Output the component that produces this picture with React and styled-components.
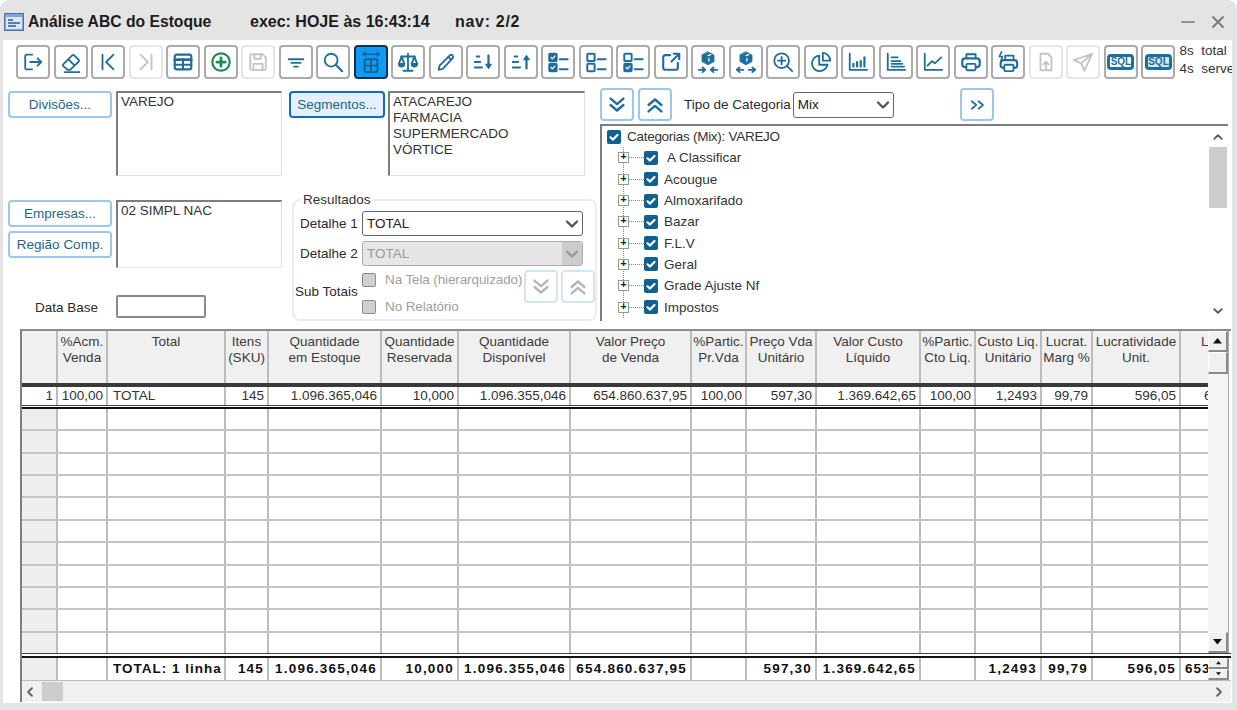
import React from 'react';
import styled, { createGlobalStyle } from 'styled-components';

const Global = createGlobalStyle`
  html, body { margin: 0; padding: 0; background: #fff; }
  * { box-sizing: border-box; }
  body { font-family: "Liberation Sans", Arial, sans-serif; font-size: 13.5px; color: #2b2b2b; }
`;

const BLUE = '#1f6d9f';
const COLS = '36px 50px 118px 43px 113px 77px 112px 121px 55px 70px 104px 55px 66px 51px 88px 27px';

const Window = styled.div`
  width: 1237px;
  height: 710px;
  background: #e4e4e4;
  border-radius: 9px 9px 0 0;
  display: flex;
  flex-direction: column;
  overflow: hidden;
`;
const TitleBar = styled.div`
  height: 40px;
  flex-shrink: 0;
  display: flex;
  align-items: center;
  padding: 3px 0 0 4px;
  color: #1c1c1c;
`;
const Title = styled.span`
  font-weight: 700;
  font-size: 15.7px;
  margin-left: 4px;
  width: 222px;
`;
const TitleInfo = styled.span`
  font-weight: 700;
  font-size: 16px;
  width: ${p => p.$w}px;
  letter-spacing: ${p => p.$spread ?? 0}px;
`;
const WinControls = styled.div`
  margin-left: auto;
  display: flex;
  gap: 16px;
  padding-right: 12px;
  color: #777;
`;
const Body = styled.div`
  flex: 1;
  margin: 0 5px 7px 3px;
  background: #fff;
  display: flex;
  flex-direction: column;
  overflow: hidden;
`;
const Toolbar = styled.div`
  height: 45px;
  flex-shrink: 0;
  display: flex;
  gap: 3.53px;
  padding: 5px 0 0 13px;
`;
const ToolButton = styled.div`
  width: 34px;
  height: 34px;
  flex-shrink: 0;
  display: flex;
  align-items: center;
  justify-content: center;
  border-radius: 4px;
  border: 2px solid ${p => (p.$active ? '#10324f' : p.$off ? '#e6e6e6' : '#ababab')};
  background: ${p => (p.$active ? '#0d9bf6' : '#fff')};
  color: ${p => (p.$active ? '#17608f' : p.$off ? '#c4c4c4' : p.$green ? '#1d8a57' : BLUE)};
`;
const SqlTag = styled.span`
  width: 27px;
  height: 16px;
  border: 3px solid ${BLUE};
  border-radius: 4px;
  background: ${p => (p.$light ? '#d5e6f1' : '#fff')};
  color: ${BLUE};
  font: 700 10px/10px "Liberation Sans", sans-serif;
  text-align: center;
`;
const Stats = styled.div`
  flex-shrink: 0;
  margin: -3px 0 0 0.5px;
  font-size: 13.5px;
  line-height: 18px;
  white-space: pre;
  color: #333;
`;

const Form = styled.div`
  height: 244px;
  flex-shrink: 0;
  display: flex;
  padding-left: 5px;
`;
const ColLeft = styled.div`
  width: 274px;
  padding-top: 6px;
`;
const ColMiddle = styled.div`
  width: 308px;
  margin-left: 7px;
  padding-top: 6px;
`;
const ColRight = styled.div`
  width: 628px;
  margin-left: 3px;
  padding-top: 3px;
`;
const Row = styled.div`
  display: flex;
  gap: ${p => p.$gap ?? 4}px;
  margin-top: ${p => p.$top ?? 0}px;
  align-items: ${p => p.$align ?? 'flex-start'};
`;
const Stack = styled.div`
  display: flex;
  flex-direction: column;
  gap: 4px;
`;
const PickButton = styled.div`
  width: ${p => p.$w}px;
  height: 27px;
  display: flex;
  align-items: center;
  justify-content: center;
  border-radius: 4px;
  font-size: 13.5px;
  color: #1d6688;
  border: 2px solid ${p => (p.$focus ? '#0f6cc4' : '#9cc6ee')};
  background: ${p => (p.$focus ? '#e4f0fb' : '#fff')};
`;
const ListBox = styled.div`
  width: ${p => p.$w}px;
  height: ${p => p.$h}px;
  padding: 1px 3px;
  line-height: 16px;
  border-style: solid;
  border-width: 2px 1px 1px 2px;
  border-color: #7d7d7d #e2e2e2 #e2e2e2 #7d7d7d;
  white-space: pre-line;
  color: #333;
`;
const DataLabel = styled.span`
  width: 108px;
  padding-left: 27px;
  margin-top: 2px;
`;
const DateInput = styled.div`
  width: 90px;
  height: 23px;
  border: 2px solid #8a8a8a;
  border-radius: 2px;
`;
const Group = styled.fieldset`
  width: 305px;
  height: 128px;
  margin: 17px 0 0 3px;
  padding: 0 0 0 1px;
  border: 2px solid #ececec;
  border-radius: 8px;
  min-inline-size: 0;
`;
const GroupTitle = styled.legend`
  padding: 0 2px;
  margin-left: 6px;
  line-height: 14px;
  color: #333;
`;
const FieldLabel = styled.span`
  width: 67px;
  padding-left: 5px;
  line-height: 25px;
`;
const SelectBox = styled.div`
  width: ${p => p.$w}px;
  height: ${p => p.$h ?? 25}px;
  display: flex;
  align-items: center;
  justify-content: space-between;
  padding-left: 4px;
  border-radius: 3px;
  border: 1.5px solid ${p => (p.$off ? '#adadad' : '#666')};
  background: ${p => (p.$off ? '#e6e6e6' : '#fff')};
  color: ${p => (p.$off ? '#999' : '#222')};
`;
const SelectArrow = styled.span`
  width: 20px;
  height: 100%;
  display: flex;
  align-items: center;
  justify-content: center;
  background: ${p => (p.$off ? '#cdcdcd' : 'transparent')};
  color: ${p => (p.$off ? '#999' : '#555')};
`;
const SubLabel = styled.span`
  width: 68px;
  margin-top: 18px;
`;
const CheckLine = styled.div`
  display: flex;
  align-items: center;
  gap: 9px;
  height: 27px;
  width: 162px;
  white-space: nowrap;
  letter-spacing: -0.12px;
  color: #a0a0a0;
`;
const GrayCheck = styled.span`
  width: 14px;
  height: 14px;
  flex-shrink: 0;
  border: 1.5px solid #8c8c8c;
  border-radius: 2px;
  background: #cfcfcf;
`;
const ChevronButton = styled.div`
  width: 34px;
  height: ${p => p.$h ?? 33}px;
  margin-top: ${p => p.$top ?? 0}px;
  display: flex;
  align-items: center;
  justify-content: center;
  border-radius: 4px;
  border: 2px solid ${p => (p.$off ? '#d4e4f5' : '#9cc6ee')};
  color: ${p => (p.$off ? '#b5b5b5' : BLUE)};
  background: #fff;
`;
const CategoryLabel = styled.span`
  margin: 0 -2px 0 8px;
`;
const Spacer = styled.span`
  width: ${p => p.$w}px;
`;
const Tree = styled.div`
  height: 197px;
  margin-top: 3px;
  display: flex;
  border-top: 2px solid #7d7d7d;
  border-left: 2px solid #7d7d7d;
  overflow: hidden;
`;
const TreeItems = styled.div`
  flex: 1;
  padding-left: 5px;
`;
const TreeRow = styled.div`
  height: 21.3px;
  display: flex;
  align-items: center;
  color: #333;
  white-space: pre;
  letter-spacing: ${p => (p.$tight ? '-0.28px' : 0)};
`;
const TreeChildren = styled.div`
  margin-left: 16px;
  border-left: 1px dotted #8a8a8a;
`;
const Expander = styled.span`
  width: 11px;
  height: 11px;
  margin-left: -6px;
  border: 1px solid #9a9a9a;
  background: #fff;
  display: flex;
  align-items: center;
  justify-content: center;
  font: 700 11px/9px "Liberation Mono", monospace;
  color: #222;
`;
const Connector = styled.span`
  width: 15px;
  border-top: 1px dotted #8a8a8a;
`;
const BlueCheck = styled.span`
  width: 14px;
  height: 14px;
  margin-right: ${p => p.$gap}px;
  flex-shrink: 0;
  border-radius: 2px;
  background: #11608f;
  color: #fff;
  display: flex;
  align-items: center;
  justify-content: center;
`;
const TreeScroll = styled.div`
  width: 18px;
  margin-right: 1px;
  display: flex;
  flex-direction: column;
  align-items: center;
  color: #555;
`;
const TreeArrow = styled.span`
  height: 21px;
  display: flex;
  align-items: center;
`;
const TreeThumb = styled.span`
  width: 100%;
  height: 61px;
  background: #cdcdcd;
`;
const TreeTrack = styled.span`
  flex: 1;
`;

const Table = styled.div`
  width: 1211px;
  height: 373px;
  margin-left: 17px;
  flex-shrink: 0;
  border-top: 2px solid #8c8c8c;
  border-left: 2px solid #808080;
  display: flex;
  flex-direction: column;
`;
const TableMain = styled.div`
  height: 322px;
  display: flex;
`;
const Cells = styled.div`
  width: 1186px;
  display: flex;
  flex-direction: column;
  overflow: hidden;
`;
const GridRow = styled.div`
  display: grid;
  grid-template-columns: ${COLS};
  height: ${p => (p.$h ? `${p.$h}px` : 'auto')};
  flex: ${p => (p.$h ? 'none' : 1)};
  border-bottom: ${p => (p.$line ? '2px solid #c4c4c4' : 'none')};
`;
const HeadCell = styled.div`
  background: #f0f0f0;
  border-right: ${p => (p.$last ? 'none' : '2px solid #bcbcbc')};
  padding: 3px 0 0 ${p => (p.$last ? 20 : 0)}px;
  line-height: 16px;
  text-align: ${p => (p.$last ? 'left' : 'center')};
  white-space: pre;
  color: #3a3a3a;
  overflow: hidden;
`;
const Cell = styled.div`
  min-width: 0;
  overflow: hidden;
  white-space: nowrap;
  border-right: ${p => (p.$last ? 'none' : '2px solid #bcbcbc')};
  padding: 0 3px 0 ${p => p.$pad ?? 3}px;
  line-height: ${p => p.$lh ?? 18}px;
  text-align: ${p => (p.$pad ? 'left' : 'right')};
  background: ${p => (p.$head ? '#eeeeee' : '#fff')};
  font-weight: ${p => (p.$bold ? 700 : 400)};
  letter-spacing: ${p => (p.$bold ? (p.$pad ? '1px' : '1.2px') : 0)};
  color: ${p => (p.$bold ? '#111' : '#333')};
`;
const ThickBar = styled.div`
  height: 4px;
  flex-shrink: 0;
  background: #3a3a3a;
`;
const DoubleBar = styled.div`
  height: ${p => p.$h}px;
  flex-shrink: 0;
  background: #fff;
  border-top: 1px solid #444;
  border-bottom: 2px solid #111;
`;
const VScroll = styled.div`
  width: 21px;
  background: #f5f5f5;
  display: flex;
  flex-direction: column;
  justify-content: space-between;
  border-right: 1px solid #aaa;
`;
const ScrollGroup = styled.div`
  display: flex;
  flex-direction: column;
`;
const BevelButton = styled.div`
  height: ${p => p.$h}px;
  background: #f0f0f0;
  border-style: solid;
  border-width: 1px 2px 2px 1px;
  border-color: #fff #8a8a8a #8a8a8a #fff;
  display: flex;
  align-items: center;
  justify-content: center;
  color: #111;
`;
const TableFoot = styled.div`
  height: 23px;
  display: flex;
  border-bottom: 1px solid #bcbcbc;
`;
const FootCells = styled.div`
  width: 1186px;
  overflow: hidden;
`;
const Spin = styled.div`
  width: 21px;
  display: flex;
  flex-direction: column;
`;
const HScroll = styled.div`
  flex: 1;
  background: #f0f0f0;
  display: flex;
  align-items: center;
  color: #666;
  padding: 0 6px 0 2px;
`;
const HThumb = styled.span`
  width: 21px;
  height: 19px;
  margin-left: 6px;
  background: #cdcdcd;
`;
const HRight = styled.span`
  margin-left: auto;
  display: flex;
`;

const Svg = ({ size = 22, sw = 2, children, view = 24 }) => (
  <svg width={size} height={size} viewBox={`0 0 ${view} ${view}`} fill="none" stroke="currentColor" strokeWidth={sw} strokeLinecap="round" strokeLinejoin="round">
    {children}
  </svg>
);

const Chevrons = ({ up, color }) => (
  <Svg size={22} sw={2.6}>
    {up
      ? <path d="M5 12l7-6 7 6M5 19l7-6 7 6" stroke={color} />
      : <path d="M5 5l7 6 7-6M5 12l7 6 7-6" stroke={color} />}
  </Svg>
);
const DownCaret = ({ size = 16 }) => (
  <Svg size={size} sw={2.4} view={16}><path d="M3 5.5l5 5 5-5" /></Svg>
);
const Tick = () => (
  <Svg size={12} sw={2.2} view={12}><path d="M2.5 6.3l2.5 2.3 4.5-4.6" /></Svg>
);
const Tri = ({ up, size = 9 }) => (
  <svg width={size} height={size / 2 + 1} viewBox="0 0 10 6"><path d={up ? 'M5 0l5 6H0z' : 'M5 6L0 0h10z'} fill="currentColor" /></svg>
);

const checkRow = (y, on) => (
  <g key={y}>
    <rect x="2.5" y={y} width="8" height="8" rx="1" fill={on ? 'currentColor' : 'none'} strokeWidth="2.2" />
    <path d={`M14 ${y + 6}h8.5`} strokeWidth="2.2" />
    {on && <path d={`M4.5 ${y + 4}l1.5 1.5 2.5-3`} stroke="#fff" strokeWidth="1.4" />}
  </g>
);
const cube = (
  <>
    <path d="M12 1l6.500 3.500v7L12 15l-6.500-3.500v-7z" fill="currentColor" strokeWidth="1" />
    <path d="M12 5l3-1M13 8v3" stroke="#fff" strokeWidth="1.300" />
  </>
);

const icons = {
  exit: <><path d="M11 4H5a1.500 1.500 0 0 0-1.500 1.500v13A1.500 1.500 0 0 0 5 20h6" /><path d="M9 12h12M17 8l4 4-4 4" /></>,
  eraser: <><path d="M3.500 14.500L13 5a2 2 0 0 1 2.800 0l4.200 4.200a2 2 0 0 1 0 2.800L11 20.500H8.500l-5-4a1.400 1.400 0 0 1 0-2zM9 9l7 7" /><path d="M5 23h16" /></>,
  first: <path d="M6 4v16M18 4l-8 8 8 8" />,
  last: <path d="M18 4v16M6 4l8 8-8 8" />,
  table: <><rect x="3" y="4" width="18" height="16" rx="2" strokeWidth="2.4" /><path d="M3 9.500h18" strokeWidth="3" /><path d="M3 15h18M12 9v11" strokeWidth="2.2" /></>,
  plus: <><circle cx="12" cy="12" r="9.500" strokeWidth="2.4" /><path d="M12 7.500v9M7.500 12h9" strokeWidth="3" /></>,
  save: <><path d="M5 3.500h12l3.500 3.500v12a1.500 1.500 0 0 1-1.500 1.500H5A1.500 1.500 0 0 1 3.500 19V5A1.500 1.500 0 0 1 5 3.500z" /><path d="M8 3.500v5h7v-5M7 20.500v-6.500h10v6.500" /></>,
  filter: <path d="M4 9h16M7 13h10M10 17h4" />,
  search: <><circle cx="10" cy="10" r="7" /><path d="M15.500 15.500L22 22" strokeWidth="2.400" /></>,
  columns: <><path d="M3 3.500h18M3 3.500l2.500-2M3 3.500l2.500 2M21 3.500l-2.500-2M21 3.500l-2.500 2" strokeWidth="1.600" /><rect x="5" y="9" width="14" height="14" rx="2" /><path d="M5 16h14M12 9v14" /></>,
  balance: <><path d="M12 3v18M7 21.500h10M4.500 6h15" /><path d="M5 6l-3 8h6zM19 6l-3 8h6z" /><path d="M2 14a3 3 0 0 0 6 0zM16 14a3 3 0 0 0 6 0z" fill="currentColor" /></>,
  pencil: <><path d="M4 20.500l1-4.500L16.500 4.500a2.200 2.200 0 0 1 3 3L8.500 19.500z" /><path d="M14.500 6.500l3 3" /></>,
  sortDown: <><path d="M5 6h3M3 12h6M3 18h8" /><path d="M18 5v12" strokeWidth="2.400" /><path d="M15 14.500h6l-3 4.500z" fill="currentColor" strokeWidth="1.200" /></>,
  sortUp: <><path d="M5 6h3M3 12h6M3 18h8" /><path d="M18 19V7" strokeWidth="2.400" /><path d="M15 9.500h6L18 5z" fill="currentColor" strokeWidth="1.200" /></>,
  checkAll: <>{checkRow(3, true)}{checkRow(14, true)}</>,
  checkNone: <>{checkRow(3, false)}{checkRow(14, false)}</>,
  checkSome: <>{checkRow(3, false)}{checkRow(14, true)}</>,
  external: <><path d="M11 4.500H6A2.500 2.500 0 0 0 3.500 7v11A2.500 2.500 0 0 0 6 20.500h11a2.500 2.500 0 0 0 2.500-2.500v-5" strokeWidth="2.300" /><path d="M12.500 11.500l8-8M15 3h6v6" strokeWidth="2.300" /></>,
  collapse: <>{cube}<path d="M2 20.500h6.500M6 18l3 2.500-3 2.500M22 20.500h-6.500M18 18l-3 2.500 3 2.500" /></>,
  expand: <>{cube}<path d="M2 20.500h7M5 18l-3 2.500L5 23M22 20.500h-7M19 18l3 2.500-3 2.500" /></>,
  zoom: <><circle cx="10.500" cy="10.500" r="8" /><path d="M10.500 6.500v8M6.500 10.500h8M16.500 16.500L22 22" /></>,
  pie: <><path d="M10 5a8.500 8.500 0 1 0 9 10H10z" /><path d="M14 2a8.500 8.500 0 0 1 8 8.500h-8z" /></>,
  bars: <><path d="M3 3v17.500h19" /><path d="M7 17v-3M11 17v-5M15 17v-6M19 17V7" strokeWidth="2.400" /></>,
  hbars: <><path d="M3 3v17.500h19" /><path d="M7 7h7M7 11h10M7 14h12M7 17h14" strokeWidth="1.800" /></>,
  line: <><path d="M3 3v17.500h19" /><path d="M6 16l5-5 3 2.500L21 7" /></>,
  printer: <><path d="M7 8V3.500h10V8" /><rect x="2.500" y="8" width="19" height="9.500" rx="3" strokeWidth="2.400" /><rect x="7" y="14" width="10" height="7" rx="1" fill="#fff" /></>,
  printFast: <><path d="M5 1L2.500 6H6l-1.500 4" strokeWidth="1.800" /><path d="M9 9V5h9v4" /><rect x="4" y="10" width="18" height="8.500" rx="3" strokeWidth="2.400" /><rect x="8" y="15" width="10" height="7" rx="1" fill="#fff" /></>,
  upload: <><path d="M6 3h8l4 4v14H6z" /><path d="M12 19v-7M9 14.500l3-3 3 3" /></>,
  send: <path d="M22 3L2 10l8 3.500 3.500 8z M22 3L10 13.500" />,
};

const TOOLS = [
  ['exit'], ['eraser'], ['first'], ['last', { off: true }], ['table'], ['plus', { green: true }], ['save', { off: true }],
  ['filter'], ['search'], ['columns', { active: true }], ['balance'], ['pencil'], ['sortDown'], ['sortUp'],
  ['checkAll'], ['checkNone'], ['checkSome'], ['external'], ['collapse'], ['expand'], ['zoom'], ['pie'],
  ['bars'], ['hbars'], ['line'], ['printer'], ['printFast'], ['upload', { off: true }], ['send', { off: true }],
];

const CATEGORIES = [' A Classificar', 'Acougue', 'Almoxarifado', 'Bazar', 'F.L.V', 'Geral', 'Grade Ajuste Nf', 'Impostos'];

const HEADERS = ['', '%Acm.\nVenda', 'Total', 'Itens\n(SKU)', 'Quantidade\nem Estoque', 'Quantidade\nReservada', 'Quantidade\nDisponível', 'Valor Preço\nde Venda', '%Partic.\nPr.Vda', 'Preço Vda\nUnitário', 'Valor Custo\nLíquido', '%Partic.\nCto Liq.', 'Custo Liq.\nUnitário', 'Lucrat.\nMarg %', 'Lucratividade\nUnit.', 'L'];
const VALUES = ['1', '100,00', 'TOTAL', '145', '1.096.365,046', '10,000', '1.096.355,046', '654.860.637,95', '100,00', '597,30', '1.369.642,65', '100,00', '1,2493', '99,79', '596,05', '6'];
const TOTALS = ['', '', 'TOTAL: 1 linha', '145', '1.096.365,046', '10,000', '1.096.355,046', '654.860.637,95', '', '597,30', '1.369.642,65', '', '1,2493', '99,79', '596,05', '653'];
const EMPTY_ROWS = Array.from({ length: 11 }, (_, i) => i);
const LAST = HEADERS.length - 1;

// left padding only for the columns that are not right aligned
const valuePad = (i, isFoot) => {
  if (i === 2) return 5;
  if (i === LAST) return isFoot ? 4 : 23;
  return undefined;
};

const App = () => (
  <Window>
    <Global />
    <TitleBar>
      <svg width="20" height="18" viewBox="0 0 20 18">
        <rect x="0.500" y="0.500" width="19" height="17" fill="#7fa6d6" stroke="#4f6fa5" />
        <rect x="2" y="4" width="16" height="12" fill="#dbe7f5" />
        <path d="M4 7h5M4 10h12M4 13h8" stroke="#2d5c9a" strokeWidth="1.500" />
      </svg>
      <Title>Análise ABC do Estoque</Title>
      <TitleInfo $w={205}>exec: HOJE às 16:43:14</TitleInfo>
      <TitleInfo $w={100} $spread={0.7}>nav: 2/2</TitleInfo>
      <WinControls>
        <Svg size={14} view={14} sw={1.600}><path d="M1 7h12" /></Svg>
        <Svg size={14} view={14} sw={1.800}><path d="M2 2l10 10M12 2L2 12" /></Svg>
      </WinControls>
    </TitleBar>
    <Body>
      <Toolbar>
        {TOOLS.map(([name, p = {}]) => (
          <ToolButton key={name} $off={p.off} $active={p.active} $green={p.green}>
            <Svg>{icons[name]}</Svg>
          </ToolButton>
        ))}
        <ToolButton><SqlTag>SQL</SqlTag></ToolButton>
        <ToolButton><SqlTag $light>SQL</SqlTag></ToolButton>
        <Stats>{'8s  total\n4s  server'}</Stats>
      </Toolbar>
      <Form>
        <ColLeft>
          <Row>
            <PickButton $w={104}>Divisões...</PickButton>
            <ListBox $w={166} $h={85}>VAREJO</ListBox>
          </Row>
          <Row $top={24}>
            <Stack>
              <PickButton $w={104}>Empresas...</PickButton>
              <PickButton $w={104}>Região Comp.</PickButton>
            </Stack>
            <ListBox $w={166} $h={68}>02 SIMPL NAC</ListBox>
          </Row>
          <Row $top={27} $gap={0} $align="center">
            <DataLabel>Data Base</DataLabel>
            <DateInput />
          </Row>
        </ColLeft>
        <ColMiddle>
          <Row $gap={3}>
            <PickButton $w={96} $focus>Segmentos...</PickButton>
            <ListBox $w={197} $h={85}>{'ATACAREJO\nFARMACIA\nSUPERMERCADO\nVÓRTICE'}</ListBox>
          </Row>
          <Group>
            <GroupTitle>Resultados</GroupTitle>
            <Row $gap={0} $top={4}>
              <FieldLabel>Detalhe 1</FieldLabel>
              <SelectBox $w={221}>TOTAL<SelectArrow><DownCaret /></SelectArrow></SelectBox>
            </Row>
            <Row $gap={0} $top={5}>
              <FieldLabel>Detalhe 2</FieldLabel>
              <SelectBox $w={221} $off>TOTAL<SelectArrow $off><DownCaret /></SelectArrow></SelectBox>
            </Row>
            <Row $gap={0}>
              <SubLabel>Sub Totais</SubLabel>
              <div>
                <CheckLine><GrayCheck />Na Tela (hierarquizado)</CheckLine>
                <CheckLine><GrayCheck />No Relatório</CheckLine>
              </div>
              <Row $gap={3}>
                <ChevronButton $off $top={4}><Chevrons /></ChevronButton>
                <ChevronButton $off $top={4}><Chevrons up /></ChevronButton>
              </Row>
            </Row>
          </Group>
        </ColMiddle>
        <ColRight>
          <Row $align="center">
            <ChevronButton><Chevrons /></ChevronButton>
            <ChevronButton><Chevrons up /></ChevronButton>
            <CategoryLabel>Tipo de Categoria</CategoryLabel>
            <SelectBox $w={101} $h={26}>Mix<SelectArrow><DownCaret /></SelectArrow></SelectBox>
            <Spacer $w={58} />
            <ChevronButton>
              <Svg size={18} sw={2.200}><path d="M5 7l6 5-6 5M14 7l6 5-6 5" /></Svg>
            </ChevronButton>
          </Row>
          <Tree>
            <TreeItems>
              <TreeRow $tight><BlueCheck $gap={6}><Tick /></BlueCheck>Categorias (Mix): VAREJO</TreeRow>
              <TreeChildren>
                {CATEGORIES.map(name => (
                  <TreeRow key={name}>
                    <Expander>+</Expander>
                    <Connector />
                    <BlueCheck $gap={6}><Tick /></BlueCheck>
                    {name}
                  </TreeRow>
                ))}
              </TreeChildren>
            </TreeItems>
            <TreeScroll>
              <TreeArrow><Svg size={12} view={16} sw={2.400}><path d="M3 10.500l5-5 5 5" /></Svg></TreeArrow>
              <TreeThumb />
              <TreeTrack />
              <TreeArrow><DownCaret size={12} /></TreeArrow>
            </TreeScroll>
          </Tree>
        </ColRight>
      </Form>
      <Table>
        <TableMain>
          <Cells>
            <GridRow $h={52}>
              {HEADERS.map((h, i) => <HeadCell key={i} $last={i === LAST}>{h}</HeadCell>)}
            </GridRow>
            <ThickBar />
            <GridRow $h={18}>
              {VALUES.map((v, i) => <Cell key={i} $pad={valuePad(i, false)} $last={i === LAST}>{v}</Cell>)}
            </GridRow>
            <DoubleBar $h={4} />
            {EMPTY_ROWS.map(r => (
              <GridRow key={r} $line={r < 10}>
                {HEADERS.map((_, i) => <Cell key={i} $head={i === 0} $last={i === LAST} />)}
              </GridRow>
            ))}
          </Cells>
          <VScroll>
            <ScrollGroup>
              <BevelButton $h={21}><Tri up /></BevelButton>
              <BevelButton $h={22} />
            </ScrollGroup>
            <BevelButton $h={21}><Tri /></BevelButton>
          </VScroll>
        </TableMain>
        <DoubleBar $h={5} />
        <TableFoot>
          <FootCells>
            <GridRow $h={22}>
              {TOTALS.map((v, i) => (
                <Cell key={i} $lh={22} $bold $head={i === 0} $pad={valuePad(i, true)} $last={i === LAST}>{v}</Cell>
              ))}
            </GridRow>
          </FootCells>
          <Spin>
            <BevelButton $h={11}><Tri up size={5} /></BevelButton>
            <BevelButton $h={11}><Tri size={5} /></BevelButton>
          </Spin>
        </TableFoot>
        <HScroll>
          <Svg size={12} view={16} sw={2.600}><path d="M10.500 3l-5 5 5 5" /></Svg>
          <HThumb />
          <HRight><Svg size={12} view={16} sw={2.600}><path d="M5.500 3l5 5-5 5" /></Svg></HRight>
        </HScroll>
      </Table>
    </Body>
  </Window>
);

export default App;
